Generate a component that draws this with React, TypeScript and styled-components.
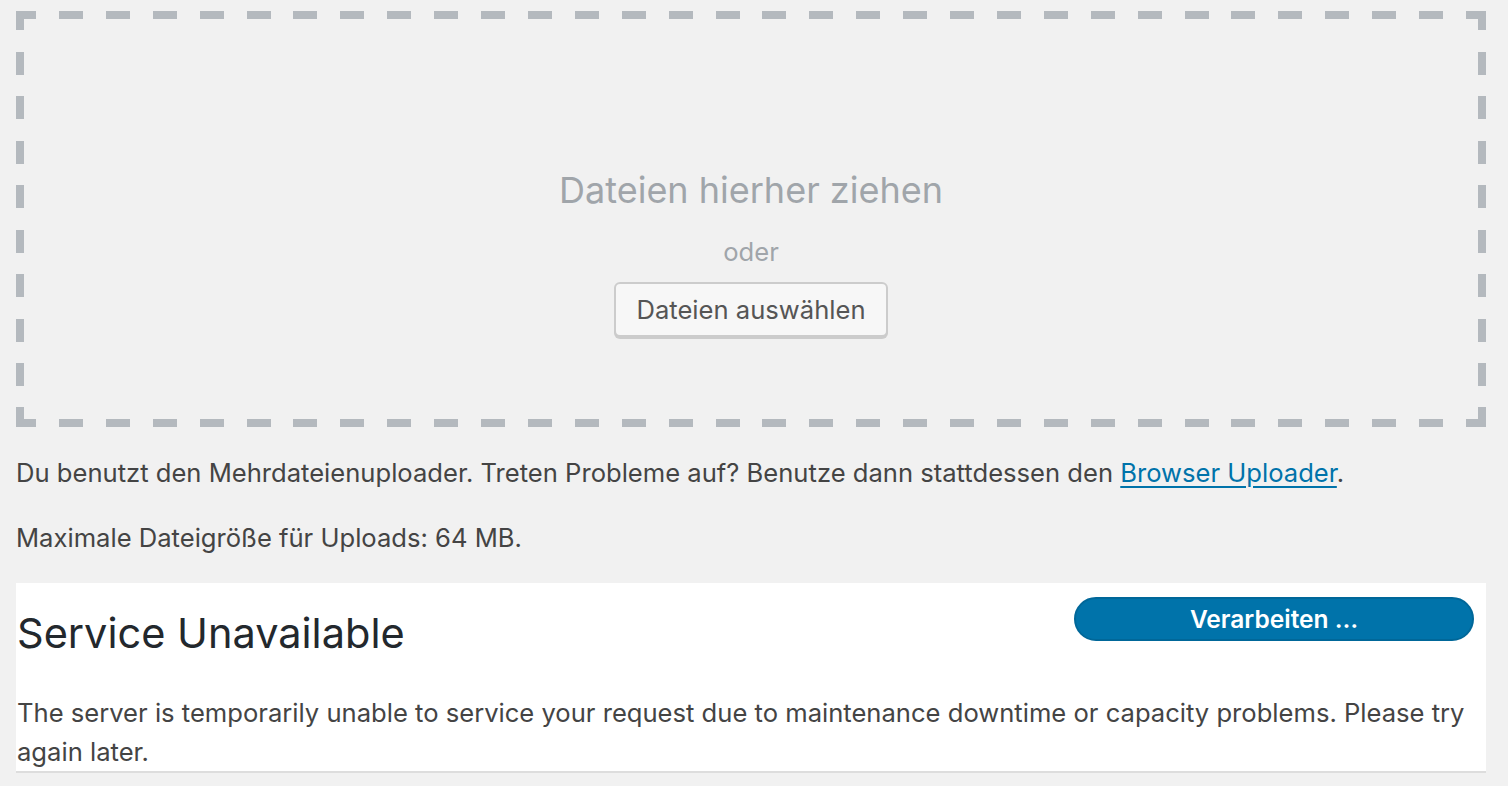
import React from "react";
import styled, { createGlobalStyle } from "styled-components";

const Global = createGlobalStyle`
  html, body { margin: 0; padding: 0; background: #f1f1f1; }
  body { font-family: Inter, "Liberation Sans", sans-serif; color: #444; }
`;

const DASH = "#b4b9be";

const Page = styled.div`
  width: 1470px;
  padding: 11px 22px 0 16px;
`;

const DropZone = styled.div`
  box-sizing: border-box;
  height: 416px;
  padding: 8px;
  background:
    repeating-linear-gradient(90deg, ${DASH} 0 20px, transparent 20px 42.9px, ${DASH} 42.9px 46.9px) left top / 100% 8px no-repeat,
    repeating-linear-gradient(90deg, ${DASH} 0 20px, transparent 20px 42.9px, ${DASH} 42.9px 46.9px) left bottom / 100% 8px no-repeat,
    repeating-linear-gradient(180deg, ${DASH} 0 19.5px, transparent 19.5px 41px, ${DASH} 41px 44.43px) left top / 8px 100% no-repeat,
    repeating-linear-gradient(180deg, ${DASH} 0 19.5px, transparent 19.5px 41px, ${DASH} 41px 44.43px) right top / 8px 100% no-repeat;
  display: flex;
  flex-direction: column;
  align-items: center;
`;

const DropTitle = styled.p`
  margin: 147px 0 0;
  font-size: 36px;
  line-height: 48px;
  color: #a0a5aa;
`;

const Or = styled.p`
  margin: 22px 0 0;
  font-size: 25.6px;
  line-height: 32px;
  color: #a0a5aa;
`;

const SelectButton = styled.button`
  margin-top: 14px;
  height: 55px;
  padding: 0 20px;
  font-family: inherit;
  font-size: 25.6px;
  color: #555;
  background: #f7f7f7;
  border: 2px solid #cccccc;
  border-radius: 6px;
  box-shadow: 0 2px 0 #cccccc;
  cursor: pointer;
`;

const Note = styled.p`
  margin: 0;
  padding-top: 26px;
  font-size: 25.6px;
  line-height: 39px;
  color: #444;
`;

const Link = styled.a`
  color: #0073aa;
  text-decoration: underline;
  text-underline-offset: 4px;
  text-decoration-thickness: 2px;
`;

const Panel = styled.div`
  margin-top: 26px;
  background: #fff;
  border-bottom: 2px solid #dddddd;
  padding: 14px 12px 0 1px;
`;

const PanelHead = styled.div`
  display: flex;
  justify-content: space-between;
  align-items: flex-start;
`;

const Heading = styled.h1`
  margin: 8px 0 0;
  font-size: 41.5px;
  font-weight: 400;
  line-height: 56px;
  color: #23282d;
`;

const Progress = styled.div`
  box-sizing: border-box;
  width: 400px;
  height: 44px;
  border-radius: 22px;
  background: #0073aa;
  border: 2px solid #006799;
  color: #fff;
  font-size: 24.5px;
  font-weight: 600;
  display: flex;
  align-items: center;
  justify-content: center;
`;

const Body = styled.p`
  margin: 32px 0 0;
  font-size: 25.6px;
  line-height: 39px;
  color: #444;
`;

export default function App() {
  return (
    <>
      <Global />
      <Page>
        <DropZone>
          <DropTitle>Dateien hierher ziehen</DropTitle>
          <Or>oder</Or>
          <SelectButton>Dateien auswählen</SelectButton>
        </DropZone>
        <Note>
          Du benutzt den Mehrdateienuploader. Treten Probleme auf? Benutze dann stattdessen den{" "}
          <Link href="#">Browser Uploader</Link>.
        </Note>
        <Note>Maximale Dateigröße für Uploads: 64 MB.</Note>
        <Panel>
          <PanelHead>
            <Heading>Service Unavailable</Heading>
            <Progress>Verarbeiten …</Progress>
          </PanelHead>
          <Body>
            The server is temporarily unable to service your request due to maintenance downtime or capacity problems. Please try again later.
          </Body>
        </Panel>
      </Page>
    </>
  );
}
